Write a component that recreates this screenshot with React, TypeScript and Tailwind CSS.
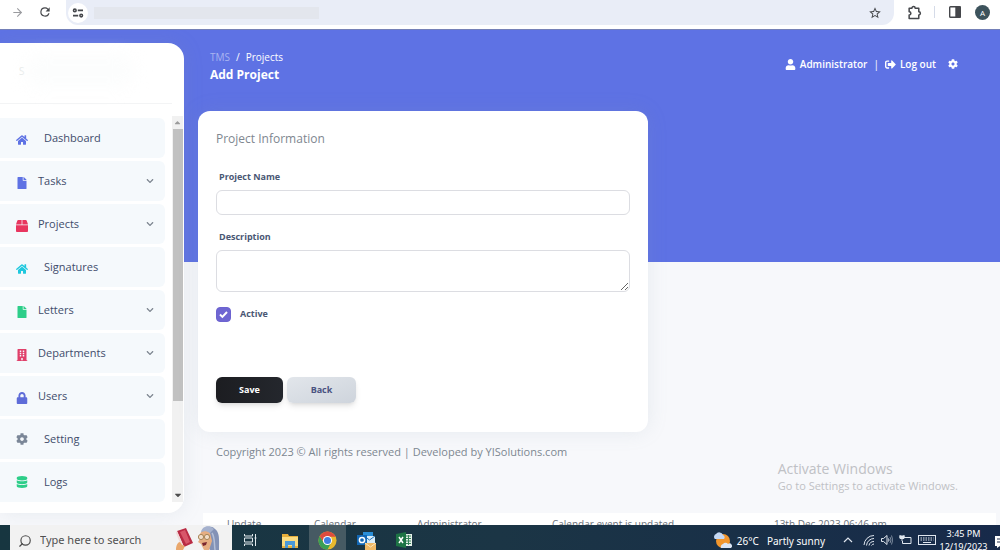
import React from "react";
import {
  FaBox,
  FaBuilding,
  FaCaretDown,
  FaCaretUp,
  FaChevronDown,
  FaCog,
  FaDatabase,
  FaFile,
  FaHome,
  FaLock,
  FaSignOutAlt,
  FaUser,
} from "react-icons/fa";
import { ArrowRight, Search } from "lucide-react";
import type { IconType } from "react-icons";

type NavItem = {
  label: string;
  icon: IconType;
  color: string;
  expandable?: boolean;
};

const navItems: NavItem[] = [
  { label: "Dashboard", icon: FaHome, color: "mt-1 text-[#5e72e4]" },
  { label: "Tasks", icon: FaFile, color: "mt-1 text-[#5e72e4]", expandable: true },
  { label: "Projects", icon: FaBox, color: "mt-1 text-[#e8365f]", expandable: true },
  { label: "Signatures", icon: FaHome, color: "mt-1 text-[#1fc8de]" },
  { label: "Letters", icon: FaFile, color: "mt-1 text-[#2dce89]", expandable: true },
  { label: "Departments", icon: FaBuilding, color: "mt-1 text-[#e0406a]", expandable: true },
  { label: "Users", icon: FaLock, color: "mt-1 text-[#5e6cd8]", expandable: true },
  { label: "Setting", icon: FaCog, color: "text-[#7b8798]" },
  { label: "Logs", icon: FaDatabase, color: "text-[#2dce89]" },
];

const BrowserBar: React.FC = () => (
  <div className="flex h-[29px] shrink-0 items-start bg-white pr-[10px] text-[#45474b]">
    <div className="flex h-6 w-[66px] shrink-0 items-center gap-[14px] pl-[11px]">
      <button aria-label="Forward" className="text-[#9a9b9f]">
        <ArrowRight size={13} strokeWidth={2} />
      </button>
      <button aria-label="Reload">
        <svg viewBox="0 0 24 24" className="size-[14px]" fill="currentColor">
          <path d="M17.65 6.35A7.96 7.96 0 0 0 12 4a8 8 0 1 0 7.73 10h-2.08A6 6 0 1 1 12 6c1.66 0 3.14.69 4.22 1.78L13 11h7V4z" />
        </svg>
      </button>
    </div>
    <div className="flex h-[25px] flex-1 items-center rounded-b-xl bg-[#e9edf7] pr-3 pl-[2px]">
      <button
        aria-label="Site information"
        className="flex size-5 items-center justify-center rounded-full bg-white"
      >
        <svg viewBox="0 0 12 12" className="size-3" fill="none" stroke="currentColor" strokeWidth="1.6">
          <circle cx="2.8" cy="3.4" r="1.3" />
          <path d="M5.8 3.4H11M1 8.6h5.2" />
          <circle cx="9.2" cy="8.6" r="1.3" />
        </svg>
      </button>
      <div className="ml-[6px] h-3 w-[225px] bg-[#e3e6ed]" />
      <button aria-label="Bookmark this tab" className="ml-auto">
        <svg viewBox="0 0 24 24" className="size-[14px]" fill="currentColor">
          <path d="m22 9.24-7.19-.62L12 2 9.19 8.63 2 9.24l5.46 4.73L5.82 21 12 17.27 18.18 21l-1.63-7.03zM12 15.4l-3.76 2.27 1-4.28-3.32-2.88 4.38-.38L12 6.1l1.71 4.04 4.38.38-3.32 2.88 1 4.28z" />
        </svg>
      </button>
    </div>
    <div className="flex h-6 items-center pl-[13px]">
      <button aria-label="Extensions">
        <svg viewBox="0 0 14 14" className="size-[15px]" fill="none" stroke="currentColor" strokeWidth="1.4" strokeLinejoin="round">
          <path d="M2 3h2.6a1.5 1.5 0 0 1 3 0H11v3.3a1.5 1.5 0 0 1 0 3V12.5H2V9.4a1.6 1.6 0 0 0 0-3.2z" />
        </svg>
      </button>
      <span className="mr-[14px] ml-[12px] h-3 w-px bg-[#d5dbe8]" />
      <button aria-label="Side panel">
        <svg viewBox="0 0 12 12" className="size-3" fill="none" stroke="currentColor" strokeWidth="1.4">
          <rect x="0.7" y="0.7" width="10.6" height="10.6" rx="0.8" />
          <path d="M7 1h4v10H7z" fill="currentColor" />
        </svg>
      </button>
      <button className="ml-[14px] size-[15px] rounded-full bg-[#3d535c] text-center text-[8px] leading-[15px] text-white">
        A
      </button>
    </div>
  </div>
);

const Sidebar: React.FC = () => (
  <aside className="mt-[13px] flex w-[184px] shrink-0 flex-col self-start rounded-r-2xl bg-white pb-[11px] shadow-[0_0_20px_rgba(136,152,170,0.15)]">
    <div className="mr-3 flex h-[61px] items-center border-b border-[#f3f4f5] pl-[19px]">
      <span className="-mt-1 text-[10px] text-[#e1e5e5]">S</span>
      <div className="-mt-1 h-8 w-28 rounded-full bg-[#fcfdfd] blur-sm" />
    </div>
    <div className="mt-3 flex">
      <nav className="flex flex-1 flex-col gap-[3px] pt-[2px] pr-[7px]">
        {navItems.map(({ label, icon: Icon, color, expandable }) => (
          <a
            key={label}
            href="#"
            className={`flex h-10 items-center rounded-r-md bg-[#f5f9fc] pr-[11px] pl-4 text-[11px] font-medium text-[#3f4c6b] ${
              expandable ? "gap-[10px]" : "gap-4"
            }`}
          >
            <Icon className={`size-3 shrink-0 ${color}`} />
            <span>{label}</span>
            {expandable && <FaChevronDown className="ml-auto size-2 text-[#7d8590]" />}
          </a>
        ))}
      </nav>
      <div className="mr-px flex w-[11px] flex-col items-center bg-[#f1f1f1]">
        <FaCaretUp className="my-[2px] size-[9px] text-[#9b9b9b]" />
        <div className="h-[272px] w-[10px] bg-[#c1c1c1]" />
        <FaCaretDown className="mt-auto mb-[2px] size-[10px] text-[#4d4d4d]" />
      </div>
    </div>
  </aside>
);

const TopBar: React.FC = () => (
  <header className="flex items-start justify-between pt-5 pr-[42px] pl-3 text-white">
    <div>
      <div className="flex gap-[6px] text-[10px] leading-[14px]">
        <a href="#" className="text-[#a9b4f1]">
          TMS
        </a>
        <span>/</span>
        <a href="#">Projects</a>
      </div>
      <h1 className="mt-[3px] text-xs leading-4 font-bold">Add Project</h1>
    </div>
    <div className="flex items-center pt-[6px] text-[10px] leading-4 font-semibold">
      <a href="#" className="flex items-center gap-1">
        <FaUser className="size-[11px]" />
        Administrator
      </a>
      <span className="mx-[6px] font-normal">|</span>
      <a href="#" className="flex items-center gap-1">
        <FaSignOutAlt className="size-[11px]" />
        Log out
      </a>
      <button aria-label="Settings" className="ml-3">
        <FaCog className="size-[10px]" />
      </button>
    </div>
  </header>
);

const ProjectForm: React.FC = () => (
  <form
    onSubmit={(e) => e.preventDefault()}
    className="mt-7 w-[56%] min-w-[450px] rounded-xl bg-white px-[18px] pt-5 pb-[29px] shadow-[0_0_20px_rgba(136,152,170,0.15)]"
  >
    <h2 className="text-xs leading-4 text-[#808790]">Project Information</h2>
    <label htmlFor="name" className="mt-[22px] ml-[3px] block text-[9px] leading-4 font-bold text-[#4a5774]">
      Project Name
    </label>
    <input
      id="name"
      type="text"
      className="mt-[5px] block h-[25px] w-full rounded-md border border-[#dcdde2] px-2 text-xs"
    />
    <label htmlFor="description" className="mt-[14px] ml-[3px] block text-[9px] leading-4 font-bold text-[#4a5774]">
      Description
    </label>
    <textarea
      id="description"
      className="mt-[5px] block h-[42px] min-h-[42px] w-full rounded-md border border-[#dcdde2] px-2 text-xs"
    />
    <div className="mt-[14px] flex items-center">
      <span className="relative flex size-[15px]">
        <input
          id="active"
          type="checkbox"
          defaultChecked
          className="peer size-[15px] appearance-none rounded border border-[#6c63d0] checked:bg-[#6f66d2]"
        />
        <svg
          viewBox="0 0 15 15"
          className="pointer-events-none absolute inset-0 hidden peer-checked:block"
          fill="none"
          stroke="white"
          strokeWidth="2"
        >
          <path d="m4 7.5 2.4 2.4L11 5" />
        </svg>
      </span>
      <label htmlFor="active" className="ml-[9px] text-[9px] leading-4 font-bold text-[#4a5774]">
        Active
      </label>
    </div>
    <div className="mt-[55px] flex gap-1 text-[9px] font-bold">
      <button
        type="submit"
        className="h-[26px] w-[67px] rounded-md bg-linear-to-r from-[#1c1d21] to-[#24272d] text-white shadow-md"
      >
        Save
      </button>
      <button
        type="button"
        className="h-[26px] w-[69px] rounded-md bg-linear-to-br from-[#e2e6eb] to-[#ced4dc] text-[#4a5280] shadow-md"
      >
        Back
      </button>
    </div>
  </form>
);

const SearchArt: React.FC = () => (
  <svg viewBox="0 0 48 25" className="mr-3 ml-auto h-[25px] w-12 shrink-0" aria-hidden="true">
    <path d="m5 6 9-3 7 15-9 4z" fill="#b92b44" />
    <path d="m8 7 5-2 5 12-4 2z" fill="#d8576a" />
    <path d="m5 6 7 16-2 1L4 8z" fill="#f0d9d8" />
    <path d="M4 25c0-5 2-8 4-8l2 3 3 1-2 4z" fill="#e9a76c" />
    <path d="M29 9c1-7 9-10 14-5 5 4 4 10 4 21h-9z" fill="#8392b6" />
    <path d="M28 9c2-4 7-4 10-1l2 8-3 9h-5l-3-6-3-2 2-3z" fill="#e6ae82" />
    <path d="M29 7c1-6 8-8 13-3l-4 4c-3-2-6-2-9-1" fill="#a5b1cd" />
    <circle cx="29" cy="12" r="2.6" fill="#f3ddc8" stroke="#a68557" />
    <circle cx="35" cy="12" r="2.6" fill="#f3ddc8" stroke="#a68557" />
    <path d="m30 18 5-1-1 3-3 1z" fill="#7a2730" />
    <path d="M40 8c3 5 2 10 3 17" fill="none" stroke="#b4bfd6" strokeWidth="1.5" />
  </svg>
);

const Taskbar: React.FC = () => (
  <footer className="flex h-[25px] shrink-0 bg-linear-to-r from-[#173640] via-[#1b3545] to-[#172a4a] pl-[10px] font-['Noto_Sans',sans-serif] text-white">
    <div className="flex w-[222px] items-center overflow-hidden bg-[#f2f2f2] pl-2 text-[#4b4b4b]">
      <Search className="mt-[6px] size-[14px] shrink-0 -scale-x-100" strokeWidth={2} />
      <input
        aria-label="Search"
        placeholder="Type here to search"
        className="mt-[6px] ml-2 w-[116px] text-[11px] placeholder:text-[#505050]"
      />
      <SearchArt />
    </div>
    <button aria-label="Task view" className="flex w-[38px] justify-center pt-2">
      <svg viewBox="0 0 14 14" className="size-[14px]" fill="none" stroke="#e2e9ed">
        <path d="M.5 1v2h8V1M.5 13v-2h8v2M.5 5h8v4h-8zM11.5 1v12M10.5 5h2" />
      </svg>
    </button>
    <button aria-label="File Explorer" className="flex w-[39px] justify-center pt-2">
      <svg viewBox="0 0 18 16" className="h-4 w-[18px]">
        <path d="M1 1h6l1 2h9v12H1z" fill="#e6ae3b" />
        <path d="M1 4h16v9H1z" fill="#fbdc80" />
        <path d="M4 8h10v7h-3v-3H7v3H4z" fill="#4b9ad8" />
      </svg>
    </button>
    <button aria-label="Chrome" className="flex w-[37px] justify-center bg-[#465a63] pt-[6px]">
      <svg viewBox="0 0 20 20" className="size-[19px]">
        <circle cx="10" cy="10" r="9.5" fill="#e8b92e" />
        <path d="M1.8 5.2A9.5 9.5 0 0 0 10 19.5L14 12H6z" fill="#3a9f55" />
        <path d="M1.8 5.2 6 12l4-6h8.6l-.4-.8A9.5 9.5 0 0 0 1.8 5.2" fill="#dd4b3e" />
        <circle cx="10" cy="10" r="4.8" fill="#fff" />
        <circle cx="10" cy="10" r="3.7" fill="#3f7ee0" />
      </svg>
    </button>
    <button aria-label="Outlook" className="flex w-[41px] justify-center pt-[6px]">
      <svg viewBox="0 0 21 19" className="h-[19px] w-[21px]">
        <path d="M7 1h10v12H7z" fill="#2a8fd8" />
        <path d="M8 5h11v8H8z" fill="#d9ecf9" />
        <path d="m8 5 5.5 4L19 5" stroke="#2376b9" fill="none" />
        <path d="M1 4h10v10H1z" fill="#1267b4" />
        <circle cx="6" cy="9" r="2.6" fill="none" stroke="#fff" strokeWidth="1.5" />
        <path d="M9 12h11v7H9z" fill="#f0b965" />
        <path d="m9 12 5.5 4 5.5-4" stroke="#fbe5bd" fill="none" />
      </svg>
    </button>
    <button aria-label="Excel" className="flex w-[33px] justify-center pt-[7px]">
      <svg viewBox="0 0 18 16" className="h-4 w-[18px]">
        <path d="M9 2h8v12H9z" fill="#e5f1e8" />
        <path d="M11 4h5M11 6.5h5M11 9h5M11 11.5h5M13.5 3v10" stroke="#35835a" />
        <path d="M1 2 11 0v16L1 14z" fill="#1d7445" />
        <path d="m4 5 4 6M8 5l-4 6" stroke="#fff" strokeWidth="1.5" />
      </svg>
    </button>
    <div className="ml-auto flex text-[10px] leading-4">
      <button className="flex pt-2">
        <svg viewBox="0 0 20 18" className="-mt-[2px] h-[18px] w-5" aria-hidden="true">
          <circle cx="11" cy="10" r="7" fill="#f1962d" />
          <path d="M3 8a3 3 0 0 1 1-5 4 4 0 0 1 7 1 2.5 2.5 0 0 1 1 4z" fill="#c4d8f4" />
          <path d="M9 17a3 3 0 0 1 2-4 3 3 0 0 1 5 0 2 2 0 0 1 3 4z" fill="#dbe6f6" />
        </svg>
        <span className="ml-[5px]">26°C</span>
        <span className="ml-2">Partly sunny</span>
      </button>
      <div className="ml-[18px] flex items-start gap-[6px] pt-[9px] text-[#dfe6ef]">
        <svg viewBox="0 0 10 12" className="mr-[4px] h-3 w-[10px]" fill="none" stroke="currentColor" strokeWidth="1.2">
          <path d="m1 8 4-4 4 4" />
        </svg>
        <svg viewBox="0 0 12 12" className="size-3" fill="none" stroke="currentColor">
          <path d="M1 11A10 10 0 0 1 11 1.5M3.5 11.5A7.5 7.5 0 0 1 11 4.5M6 11.5a5 5 0 0 1 5-4M8.5 11.5a3 3 0 0 1 2.5-1.5" />
        </svg>
        <svg viewBox="0 0 12 12" className="size-3" fill="none" stroke="currentColor">
          <path d="M.5 4.5h2L6 1.5v9l-3.5-3h-2zM7.5 4.5q1 1.5 0 3" />
          <path d="M9 3q2 3 0 6M10.5 1.5q2.5 4.5 0 9" opacity=".5" />
        </svg>
        <svg viewBox="0 0 13 12" className="h-3 w-[13px]" fill="none" stroke="currentColor">
          <path d="M5 3.5h7v6H3.5V7M1 1v3h4V1M3 4v3" />
          <path d="M1 2h4v2.5H1z" fill="currentColor" />
        </svg>
        <svg viewBox="0 0 18 12" className="h-3 w-[18px]" fill="none" stroke="currentColor">
          <rect x=".5" y="1.5" width="17" height="9" />
          <path d="M2.5 4h13M2.5 6h13" strokeDasharray="1.5 1" />
          <path d="M5 8.5h8" />
        </svg>
      </div>
      <div className="w-[59px] pt-[2px] pr-1 text-center text-[9px] leading-[13px] whitespace-nowrap">
        <div>3:45 PM</div>
        <div>12/19/2023</div>
      </div>
      <button aria-label="Notifications" className="w-[5px] overflow-hidden pt-2">
        <svg viewBox="0 0 12 12" className="size-3">
          <path d="M0 0h12v10H5l-3 2v-2H0z" fill="#fff" />
          <path d="M2 3h8M2 6h8" stroke="#24334f" />
        </svg>
      </button>
    </div>
  </footer>
);

const App: React.FC = () => {
  return (
    <div className="flex h-screen flex-col overflow-hidden font-['Open_Sans',sans-serif]">
      <BrowserBar />
      <div className="flex min-h-0 flex-1 overflow-hidden border-t border-[#7480b8] bg-[linear-gradient(#5e72e4_232px,#f7f8fb_232px)]">
        <Sidebar />
        <main className="flex min-w-0 flex-1 flex-col pl-[14px]">
          <TopBar />
          <ProjectForm />
          <div className="flex items-start justify-between pr-[42px] pl-[18px]">
            <p className="mt-3 text-[11px] leading-4 text-[#7d8791]">
              Copyright 2023 © All rights reserved | Developed by YISolutions.com
            </p>
            <div className="mt-7 text-[#bfc1c5]">
              <p className="text-sm leading-[18px]">Activate Windows</p>
              <p className="text-[11px] leading-4">Go to Settings to activate Windows.</p>
            </div>
          </div>
          <table className="mt-[19px] mr-1 ml-[5px] table-fixed bg-white text-left text-[10px] leading-4 text-[#6b727b]">
            <tbody>
              <tr>
                <td className="w-[14%] pt-[3px] pl-6">Update</td>
                <td className="w-[13%] pt-[3px]">Calendar</td>
                <td className="w-[17%] pt-[3px]">Administrator</td>
                <td className="w-[28%] pt-[3px]">Calendar event is updated</td>
                <td className="pt-[3px]">13th Dec 2023 06:46 pm</td>
              </tr>
            </tbody>
          </table>
        </main>
      </div>
      <Taskbar />
    </div>
  );
};

export default App;
